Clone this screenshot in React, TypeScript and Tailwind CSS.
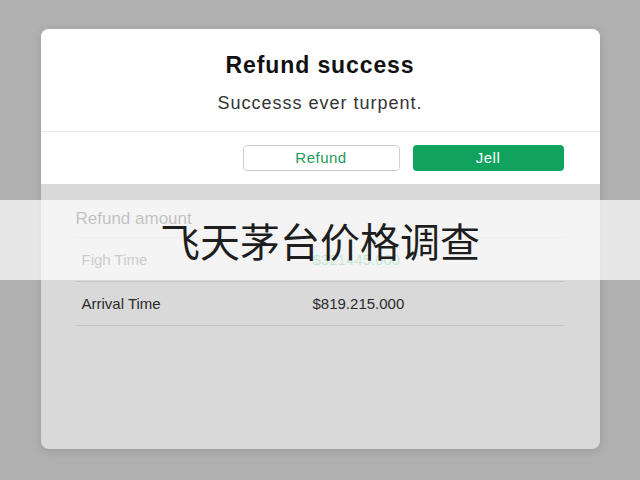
export default function App() {
  const rows = [
    { label: "Figh Time", value: "$321445.000", labelColor: "text-[#555]", valueColor: "text-[#3aa86a]" },
    { label: "Arrival Time", value: "$819.215.000", labelColor: "text-[#2b2b2b]", valueColor: "text-[#2b2b2b]" },
  ];

  return (
    <div
      className="relative w-[640px] h-[480px] overflow-hidden bg-[#b0b0b0] pt-[29px]"
      style={{ fontFamily: '"Liberation Sans", Arial, sans-serif' }}
    >
      {/* Dialog card */}
      <div className="mx-auto w-[559px] h-[420px] rounded-[8px] overflow-hidden bg-[#d9d9d9] shadow-[0_2px_8px_rgba(0,0,0,0.12)] flex flex-col">
        <div className="bg-white flex flex-col items-center pt-[22px] h-[103px] border-b border-[#e6e6e6]">
          <h1 className="text-[23px] leading-[28px] font-bold tracking-[0.9px] text-[#111]">Refund success</h1>
          <p className="mt-[12px] text-[18px] leading-[24px] tracking-[1px] text-[#333]">Successs ever turpent.</p>
        </div>

        <div className="bg-white h-[52px] flex justify-end items-start pt-[13px] pr-[36px] gap-[13px]">
          <button className="w-[157px] h-[26px] rounded-[4px] border border-[#cfcfcf] bg-white text-[15px] tracking-[0.5px] text-[#1f9a5c]">
            Refund
          </button>
          <button className="w-[151px] h-[26px] rounded-[4px] bg-[#0fa35e] text-[15px] tracking-[0.5px] text-white">
            Jell
          </button>
        </div>

        <div className="flex-1 pl-[35px] pr-[36px]">
          <div className="h-[54px] flex items-end pb-[6px] border-b border-[#c8c8c8]">
            <span className="text-[17px] text-[#303030]">Refund amount</span>
          </div>
          {rows.map((r) => (
            <div key={r.label} className="h-[44px] flex items-center border-b border-[#c4c4c4] pl-[6px] pt-[2px]">
              <span className={`w-[231px] text-[15px] ${r.labelColor}`}>{r.label}</span>
              <span className={`text-[15px] ${r.valueColor}`}>{r.value}</span>
            </div>
          ))}
        </div>
      </div>

      {/* Caption band */}
      <div className="absolute left-0 top-[200px] w-[640px] h-[80px] bg-white/70 flex items-center justify-center">
        <span
          className="text-[40px] leading-[48px] text-[#1e1e1e]"
          style={{ fontFamily: '"Noto Sans CJK SC", "Noto Sans", sans-serif' }}
        >
          飞天茅台价格调查
        </span>
      </div>
    </div>
  );
}
